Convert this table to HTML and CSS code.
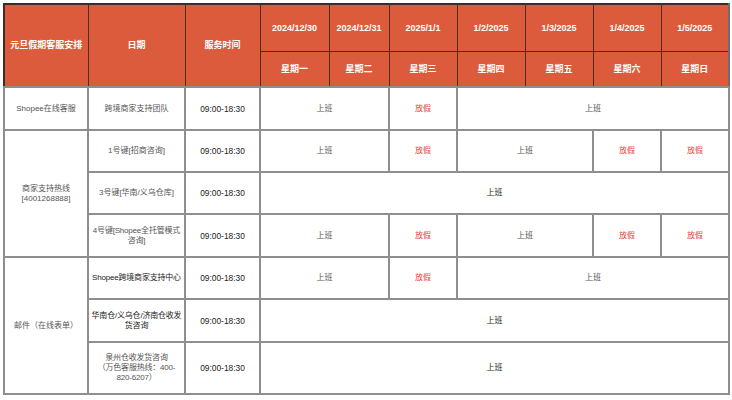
FILE: index.html
```html
<!DOCTYPE html>
<html lang="zh-CN">
<head>
<meta charset="utf-8">
<title>元旦假期客服安排</title>
<link rel="stylesheet" href="styles.css">
</head>
<body>
<table class="sched">
  <colgroup>
    <col class="c1"><col class="c2"><col class="c3">
    <col class="c4"><col class="c5"><col class="c6"><col class="c7">
    <col class="c8"><col class="c9"><col class="c10">
  </colgroup>
  <thead>
    <tr class="hr1">
      <th rowspan="2">元旦假期客服安排</th>
      <th rowspan="2">日期</th>
      <th rowspan="2">服务时间</th>
      <th>2024/12/30</th>
      <th>2024/12/31</th>
      <th>2025/1/1</th>
      <th>1/2/2025</th>
      <th>1/3/2025</th>
      <th>1/4/2025</th>
      <th>1/5/2025</th>
    </tr>
    <tr class="hr2">
      <th>星期一</th>
      <th>星期二</th>
      <th>星期三</th>
      <th>星期四</th>
      <th>星期五</th>
      <th>星期六</th>
      <th>星期日</th>
    </tr>
  </thead>
  <tbody>
    <tr class="r1">
      <td>Shopee在线客服</td>
      <td>跨境商家支持团队</td>
      <td class="time">09:00-18:30</td>
      <td colspan="2">上班</td>
      <td class="off">放假</td>
      <td colspan="4">上班</td>
    </tr>
    <tr class="r2">
      <td rowspan="3">商家支持热线<br>[4001268888]</td>
      <td>1号键[招商咨询]</td>
      <td class="time">09:00-18:30</td>
      <td colspan="2">上班</td>
      <td class="off">放假</td>
      <td colspan="2">上班</td>
      <td class="off">放假</td>
      <td class="off">放假</td>
    </tr>
    <tr class="r3">
      <td>3号键[华南/义乌仓库]</td>
      <td class="time">09:00-18:30</td>
      <td colspan="7" class="dark">上班</td>
    </tr>
    <tr class="r4">
      <td class="nw">4号键[Shopee全托管模式<br>咨询]</td>
      <td class="time">09:00-18:30</td>
      <td colspan="2">上班</td>
      <td class="off">放假</td>
      <td colspan="2">上班</td>
      <td class="off">放假</td>
      <td class="off">放假</td>
    </tr>
    <tr class="r5">
      <td rowspan="3">邮件（在线表单）</td>
      <td class="dark nw">Shopee跨境商家支持中心</td>
      <td class="time">09:00-18:30</td>
      <td colspan="2">上班</td>
      <td class="off">放假</td>
      <td colspan="4">上班</td>
    </tr>
    <tr class="r6">
      <td class="dark nw">华南仓/义乌仓/济南仓收发<br>货咨询</td>
      <td class="time">09:00-18:30</td>
      <td colspan="7" class="dark">上班</td>
    </tr>
    <tr class="r7">
      <td class="nw">泉州仓收发货咨询<br>（万色客服热线：400-<br>820-6207）</td>
      <td class="time">09:00-18:30</td>
      <td colspan="7" class="dark">上班</td>
    </tr>
  </tbody>
</table>
</body>
</html>
```
FILE: styles.css
```css
html, body {
  margin: 0;
  padding: 0;
  background: #ffffff;
}
body {
  padding: 3px 0 0 3px;
  font-family: "Liberation Sans", "Noto Sans CJK SC", Arial, sans-serif;
}
.sched {
  border-collapse: collapse;
  table-layout: fixed;
  width: 725px;
  border: 2px solid #3f2a24;
  border-right-color: #6d6d6d;
  border-bottom-color: #6d6d6d;
}
.c1 { width: 84px; }
.c2 { width: 97px; }
.c3 { width: 75px; }
.c4 { width: 69px; }
.c5 { width: 60px; }
.c6 { width: 68px; }
.c7 { width: 68px; }
.c8 { width: 68px; }
.c9 { width: 68px; }
.c10 { width: 68px; }

.sched th {
  background: #dd5b3d;
  color: #ffffff;
  font-weight: bold;
  font-size: 9px;
  border: 1.5px solid #55291f;
  padding: 0;
  text-align: center;
  vertical-align: middle;
  line-height: 11px;
}
.hr1 th { height: 46px; }
.hr2 th { height: 34px; }

.sched td {
  border: 2px solid #8e8e8e;
  font-size: 8px;
  color: #555555;
  text-align: center;
  vertical-align: middle;
  padding: 0 2px;
  line-height: 10px;
  background: #ffffff;
}
.sched td.nw {
  white-space: nowrap;
  padding: 0;
  letter-spacing: -0.2px;
}
.sched td.time {
  font-size: 8.4px;
  color: #222222;
}
.sched td.off {
  color: #e8453c;
}
.sched td.dark {
  color: #222222;
}
.r1 td { height: 41px; }
.r2 td { height: 40px; }
.r3 td { height: 40px; }
.r4 td { height: 41px; }
.r5 td { height: 40px; }
.r6 td { height: 41px; }
.r7 td { height: 50px; }
```
